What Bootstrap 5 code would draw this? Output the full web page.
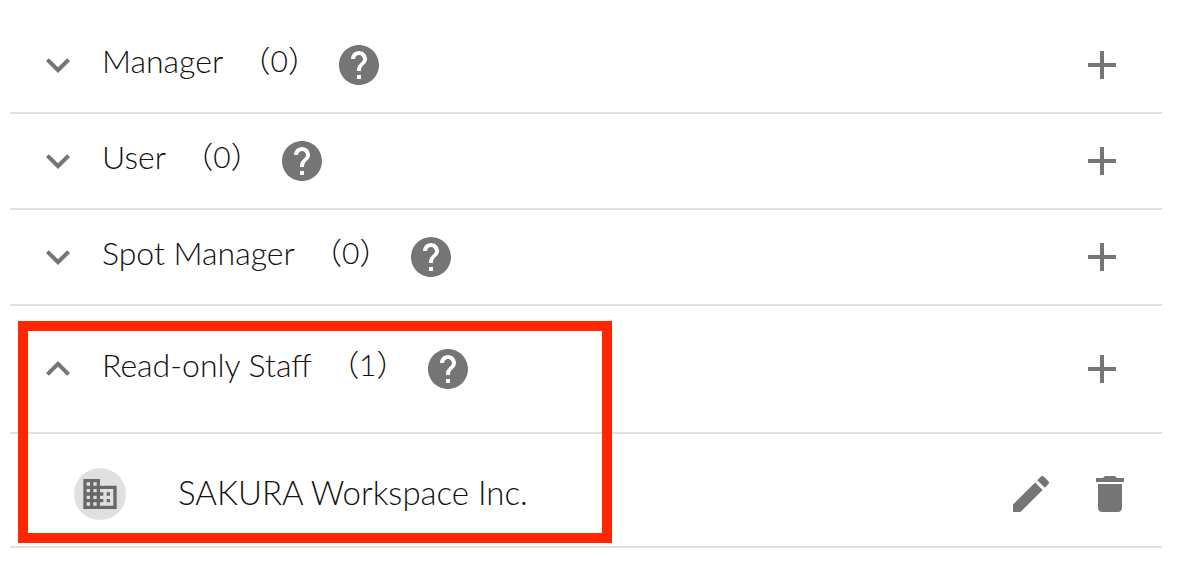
<!DOCTYPE html>
<html lang="en">
<head>
<meta charset="utf-8">
<meta name="viewport" content="width=device-width, initial-scale=1">
<title>Staff roles</title>
<link href="https://cdn.jsdelivr.net/npm/bootstrap@5.3.0/dist/css/bootstrap.min.css" rel="stylesheet">
<style>
  body { font-family: Lato, "Noto Sans CJK JP", sans-serif; font-weight: 300; color: #111; background: #fff; }
  .role-list { padding: 18px 24px 20px 10px; }
  .role-row { min-height: 96px; padding: 0 36px 0 24px; border-bottom: 2px solid #e0e0e0; }
  .role-row.open { min-height: 128px; }
  .member-row { min-height: 114px; padding: 8px 28px 0 64px; border-bottom: 2px solid #e0e0e0; }
  .icon-btn { display: flex; padding: 0; border: 0; background: none; color: #757575; }
  .icon-btn svg { width: 48px; height: 48px; fill: currentColor; }
  .role-name { font-size: 32px; line-height: 40px; margin-left: 20px; padding-bottom: 8px; }
  .role-count { width: 112px; font-size: 30px; line-height: 40px; padding-bottom: 10px; text-align: center; }
  .avatar { width: 52px; height: 52px; background: #e0e0e0; color: #686868; }
  .avatar svg { width: 40px; height: 40px; fill: currentColor; }
  .member-name { font-size: 33px; line-height: 40px; margin-left: 52px; padding-bottom: 4px; }
  .member-actions { gap: 31px; }
  .highlight { top: 15px; bottom: 5px; left: 8px; width: 594px; border: 10px solid #ff2600; pointer-events: none; }
</style>
</head>
<body>
<svg class="d-none" aria-hidden="true">
  <symbol id="down" viewBox="0 0 24 24"><path d="M16.59 8.59 12 13.17 7.41 8.59 6 10l6 6 6-6z"/></symbol>
  <symbol id="up" viewBox="0 0 24 24"><path d="m12 8-6 6 1.41 1.41L12 10.83l4.59 4.58L18 14z"/></symbol>
  <symbol id="help" viewBox="0 0 24 24"><path d="M12 2C6.48 2 2 6.48 2 12s4.48 10 10 10 10-4.48 10-10S17.52 2 12 2zm1 17h-2v-2h2v2zm2.07-7.75-.9.92C13.45 12.9 13 13.5 13 15h-2v-.5c0-1.1.45-2.1 1.17-2.83l1.24-1.26c.37-.36.59-.86.59-1.41 0-1.1-.9-2-2-2s-2 .9-2 2H8c0-2.21 1.79-4 4-4s4 1.79 4 4c0 .88-.36 1.68-.93 2.25z"/></symbol>
  <symbol id="add" viewBox="0 0 24 24"><path d="M19 13h-6v6h-2v-6H5v-2h6V5h2v6h6z"/></symbol>
  <symbol id="edit" viewBox="0 0 24 24"><path d="M3 17.25V21h3.75L17.81 9.94l-3.75-3.75L3 17.25zM20.71 7.04c.39-.39.39-1.02 0-1.41l-2.34-2.34c-.39-.39-1.02-.39-1.41 0l-1.83 1.83 3.75 3.75 1.83-1.83z"/></symbol>
  <symbol id="trash" viewBox="0 0 24 24"><path d="M6 19c0 1.1.9 2 2 2h8c1.1 0 2-.9 2-2V7H6v12zM19 4h-3.5l-1-1h-5l-1 1H5v2h14V4z"/></symbol>
  <symbol id="building" viewBox="0 0 24 24"><path d="M12 7V3H2v18h20V7H12zM6 19H4v-2h2v2zm0-4H4v-2h2v2zm0-4H4V9h2v2zm0-4H4V5h2v2zm4 12H8v-2h2v2zm0-4H8v-2h2v2zm0-4H8V9h2v2zm0-4H8V5h2v2zm10 12h-8v-2h2v-2h-2v-2h2v-2h-2V9h8v10zm-2-8h-2v2h2v-2zm0 4h-2v2h2v-2z"/></symbol>
</svg>

<main class="role-list">
  <div class="role-row d-flex align-items-center">
    <button class="icon-btn" aria-label="Expand Manager"><svg><use href="#down"/></svg></button>
    <span class="role-name">Manager</span><span class="role-count">（0）</span>
    <button class="icon-btn" aria-label="About Manager"><svg><use href="#help"/></svg></button>
    <button class="icon-btn ms-auto" aria-label="Add Manager"><svg><use href="#add"/></svg></button>
  </div>
  <div class="role-row d-flex align-items-center">
    <button class="icon-btn" aria-label="Expand User"><svg><use href="#down"/></svg></button>
    <span class="role-name">User</span><span class="role-count">（0）</span>
    <button class="icon-btn" aria-label="About User"><svg><use href="#help"/></svg></button>
    <button class="icon-btn ms-auto" aria-label="Add User"><svg><use href="#add"/></svg></button>
  </div>
  <div class="role-row d-flex align-items-center">
    <button class="icon-btn" aria-label="Expand Spot Manager"><svg><use href="#down"/></svg></button>
    <span class="role-name">Spot Manager</span><span class="role-count">（0）</span>
    <button class="icon-btn" aria-label="About Spot Manager"><svg><use href="#help"/></svg></button>
    <button class="icon-btn ms-auto" aria-label="Add Spot Manager"><svg><use href="#add"/></svg></button>
  </div>
  <section class="position-relative">
    <div class="role-row open d-flex align-items-center">
      <button class="icon-btn" aria-label="Collapse Read-only Staff"><svg><use href="#up"/></svg></button>
      <span class="role-name">Read-only Staff</span><span class="role-count">（1）</span>
      <button class="icon-btn" aria-label="About Read-only Staff"><svg><use href="#help"/></svg></button>
      <button class="icon-btn ms-auto" aria-label="Add Read-only Staff"><svg><use href="#add"/></svg></button>
    </div>
    <div class="member-row d-flex align-items-center">
      <span class="avatar rounded-circle d-flex align-items-center justify-content-center"><svg aria-hidden="true"><use href="#building"/></svg></span>
      <span class="member-name">SAKURA Workspace Inc.</span>
      <div class="member-actions d-flex ms-auto">
        <button class="icon-btn" aria-label="Edit"><svg><use href="#edit"/></svg></button>
        <button class="icon-btn" aria-label="Delete"><svg><use href="#trash"/></svg></button>
      </div>
    </div>
    <div class="highlight position-absolute"></div>
  </section>
</main>
<script src="https://cdn.jsdelivr.net/npm/bootstrap@5.3.0/dist/js/bootstrap.bundle.min.js"></script>
</body>
</html>
